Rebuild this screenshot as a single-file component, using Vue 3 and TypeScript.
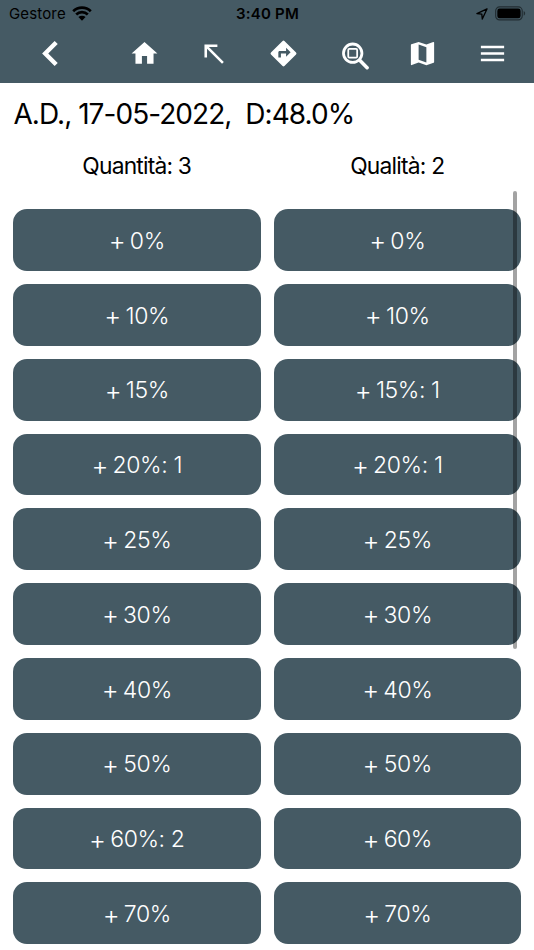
<script setup lang="ts">
interface Level {
  label: string
  quantity?: number
  quality?: number
}

const levels: Level[] = [
  { label: '0%' },
  { label: '10%' },
  { label: '15%', quality: 1 },
  { label: '20%', quantity: 1, quality: 1 },
  { label: '25%' },
  { label: '30%' },
  { label: '40%' },
  { label: '50%' },
  { label: '60%', quantity: 2 },
  { label: '70%' },
]

const caption = (label: string, count?: number): string =>
  count ? ` ${label}: ${count}` : ` ${label}`
</script>

<template>
  <div class="screen">
    <header class="header">
      <div class="status">
        <div class="carrier">
          <span>Gestore</span>
          <svg class="wifi" viewBox="0 0 20 15">
            <path d="M1.2 5.2a12.6 12.6 0 0 1 17.6 0M4.2 8.5a8.3 8.3 0 0 1 11.6 0" fill="none" stroke="#000" stroke-width="2.7" />
            <path d="M6.4 11.1a5.2 5.2 0 0 1 7.2 0L10 14.7z" fill="#000" />
          </svg>
        </div>
        <span class="clock">3:40 PM</span>
        <div class="indicators">
          <svg class="location" viewBox="0 0 12 12">
            <path d="M11 .9.9 5.6l4.9.5.5 5z" fill="none" stroke="#000" stroke-width="1.3" stroke-linejoin="round" />
          </svg>
          <svg class="battery" viewBox="0 0 32 15">
            <rect x=".7" y=".7" width="27.4" height="13.4" rx="4" fill="none" stroke="#222d32" stroke-width="1.2" />
            <rect x="2.4" y="2.4" width="24" height="10" rx="2.4" />
            <path d="M29.6 5c2 .8 2 4 0 4.8z" fill="#222d32" />
          </svg>
        </div>
      </div>
      <nav class="toolbar">
        <button class="tool back" aria-label="Indietro">
          <svg viewBox="0 0 24 24"><path d="M16.4 3.5 7.9 12l8.5 8.5" fill="none" stroke="currentColor" stroke-width="3.4" /></svg>
        </button>
        <button class="tool" aria-label="Home">
          <svg viewBox="0 0 24 24"><path d="M10 20v-6h4v6h5v-8h3L12 3 2 12h3v8z" /></svg>
        </button>
        <button class="tool" aria-label="Freccia">
          <svg viewBox="0 0 24 24"><path d="M5 15h2V8.41L18.59 20 20 18.59 8.41 7H15V5H5z" /></svg>
        </button>
        <button class="tool" aria-label="Direzioni">
          <svg viewBox="0 0 24 24"><path d="m21.71 11.29-9-9a.996.996 0 0 0-1.41 0l-9 9a.996.996 0 0 0 0 1.41l9 9c.39.39 1.02.39 1.41 0l9-9a.996.996 0 0 0 0-1.41zM14 14.5V12h-4v3H8v-4c0-.55.45-1 1-1h5V7.5l3.5 3.5-3.5 3.5z" /></svg>
        </button>
        <button class="tool search" aria-label="Cerca area">
          <svg viewBox="0 0 28 28">
            <circle cx="11.3" cy="11.8" r="8.9" fill="none" stroke="currentColor" stroke-width="2.7" />
            <rect x="7" y="7.6" width="8.6" height="8.4" rx="1" fill="none" stroke="currentColor" stroke-width="1.7" />
            <path d="m18.1 18.7 7.1 7.1" stroke="currentColor" stroke-width="3.4" stroke-linecap="round" />
          </svg>
        </button>
        <button class="tool" aria-label="Mappa">
          <svg viewBox="0 0 24 24"><path d="m20.5 3-.16.03L15 5.1 9 3 3.36 4.9c-.21.07-.36.25-.36.48V20.5c0 .28.22.5.5.5l.16-.03L9 18.9l6 2.1 5.64-1.9c.21-.07.36-.25.36-.48V3.5c0-.28-.22-.5-.5-.5zM15 19l-6-2.11V5l6 2.11V19z" /></svg>
        </button>
        <button class="tool" aria-label="Menu">
          <svg viewBox="0 0 24 24"><path d="M3 18h18v-2H3zm0-5h18v-2H3zm0-7v2h18V6z" /></svg>
        </button>
      </nav>
    </header>

    <h1 class="title">A.D., 17-05-2022,&nbsp; D:48.0%</h1>
    <div class="totals">
      <span>Quantità: 3</span>
      <span>Qualità: 2</span>
    </div>

    <main class="levels">
      <template v-for="level in levels" :key="level.label">
        <button class="level"><span class="plus">+</span>{{ caption(level.label, level.quantity) }}</button>
        <button class="level"><span class="plus">+</span>{{ caption(level.label, level.quality) }}</button>
      </template>
    </main>
    <div class="scrollbar"></div>
  </div>
</template>

<style>
body {
  background: #fff;
  overflow: hidden;
}
</style>

<style scoped>
.screen {
  position: relative;
  width: 534px;
  height: 950px;
  overflow: hidden;
  background: #fff;
  color: #000;
  font-family: Inter, "Liberation Sans", sans-serif;
}
button {
  padding: 0;
  border: 0;
  font: inherit;
  color: #fff;
}
.header {
  height: 83px;
  background: #455a64;
}
.status {
  display: grid;
  grid-template-columns: 1fr auto 1fr;
  align-items: center;
  height: 27px;
  padding: 0 8px 0 9px;
  font-size: 15px;
}
.carrier {
  display: flex;
  align-items: center;
  gap: 6px;
  letter-spacing: 0.15px;
}
.wifi {
  width: 20px;
  height: 15px;
}
.clock {
  font-weight: 600;
  letter-spacing: 0.2px;
}
.indicators {
  display: flex;
  justify-content: flex-end;
  align-items: center;
  gap: 7px;
}
.location {
  width: 12px;
  height: 12px;
}
.battery {
  width: 31px;
  height: 15px;
}
.toolbar {
  display: grid;
  grid-template-columns: 100px repeat(6, 69.6px);
  height: 53px;
}
.tool {
  display: flex;
  align-items: center;
  justify-content: center;
  background: none;
}
.tool:nth-child(n + 2) {
  margin: 0 -9.6px 0 9.6px;
}
.tool svg {
  width: 31px;
  height: 31px;
  flex: none;
  fill: currentColor;
}
.tool.search svg {
  width: 29px;
  height: 29px;
  margin: 4px 0 0 5px;
}
.title {
  margin: 0;
  padding: 13px 0 0 13.5px;
  font-size: 28px;
  font-weight: 400;
  line-height: 36px;
  letter-spacing: -0.95px;
  white-space: nowrap;
}
.totals {
  display: grid;
  grid-template-columns: 1fr 1fr;
  column-gap: 13px;
  padding: 19px 13px 0;
  font-size: 22.8px;
  font-weight: 400;
  line-height: 30px;
  letter-spacing: -0.8px;
  text-align: center;
}
.levels {
  display: grid;
  grid-template-columns: 1fr 1fr;
  grid-auto-rows: 61.8px;
  gap: 13px;
  padding: 28.2px 13px 0;
}
.level {
  padding-top: 1.5px;
  border-radius: 14px;
  background: #455a64;
  font-size: 23px;
  font-weight: 350;
  line-height: 30px;
  letter-spacing: -0.4px;
}
.plus {
  margin-right: -1.5px;
  font-size: 26px;
  line-height: 0;
  vertical-align: -1.5px;
}
.scrollbar {
  position: absolute;
  top: 191px;
  right: 17px;
  width: 4px;
  height: 458px;
  border-radius: 2px;
  background: rgba(0, 0, 0, 0.36);
}
</style>
